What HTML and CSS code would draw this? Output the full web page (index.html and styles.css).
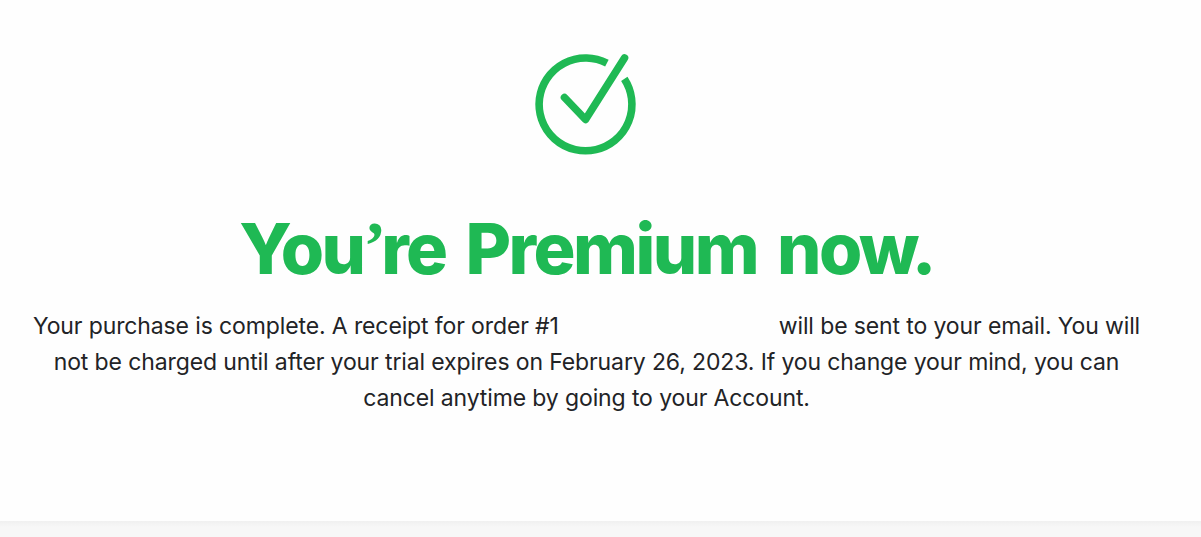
FILE: index.html
```html
<!DOCTYPE html>
<html lang="en">

<head>
    <meta charset="UTF-8">
    <meta name="viewport" content="width=device-width, initial-scale=1.0">
    <title>You’re Premium now.</title>
    <link rel="stylesheet" href="styles.css">
</head>

<body>

    <main class="receipt">
        <svg class="check" viewBox="0 0 104 104" fill="none" aria-hidden="true">
            <path class="ring" d="M72.9 11.2A46.4 46.4 0 1 0 90.3 26.9" />
            <path class="tick" d="M30.5 45.5L51.5 67.5L90.5 6" />
        </svg>

        <h1>You<span class="apostrophe">’</span>re Premium now.</h1>

        <p class="message">
            <span class="line">Your purchase is complete. A receipt for order #1<span class="order"></span>will be sent to your email. You will</span>
            <span class="line">not be charged until after your trial expires on February 26, 2023. If you change your mind, you can</span>
            <span class="line">cancel anytime by going to your Account.</span>
        </p>
    </main>

    <footer class="footer"></footer>

</body>

</html>
```
FILE: styles.css
```css
body {
    margin: 0;
    height: 537px;
    overflow: hidden;
    display: flex;
    flex-direction: column;
    font-family: Inter, sans-serif;
    background: #fefefe;
}

.receipt {
    height: 521px;
    display: flex;
    flex-direction: column;
    align-items: center;
    padding-right: 28px;
    box-sizing: border-box;
}

.check {
    flex: none;
    width: 104px;
    height: 104px;
    margin-top: 52px;
    margin-right: 2px;
}

.ring {
    stroke: #1fb954;
    stroke-width: 7.6;
}

.tick {
    stroke: #1fb954;
    stroke-width: 7.6;
    stroke-linecap: round;
    stroke-linejoin: round;
}

h1 {
    margin: 51px 0 0;
    font-size: 70px;
    line-height: 84px;
    font-weight: 800;
    letter-spacing: -2.5px;
    word-spacing: 7px;
    color: #1fb954;
    white-space: nowrap;
}

.apostrophe {
    font-family: "Liberation Serif", serif;
    font-size: 68px;
    font-weight: bold;
    line-height: 0;
    letter-spacing: -5px;
    vertical-align: 6px;
}

.message {
    margin: 17px 0 0;
    font-size: 23px;
    line-height: 36px;
    letter-spacing: -0.12px;
    color: #222326;
    text-align: center;
}

.line {
    display: block;
    white-space: nowrap;
}

/* room left for the rest of the order number */
.order {
    display: inline-block;
    width: 220px;
}

.footer {
    height: 16px;
    background: linear-gradient(#f0f0f0, #f7f7f7 6px);
}
```
